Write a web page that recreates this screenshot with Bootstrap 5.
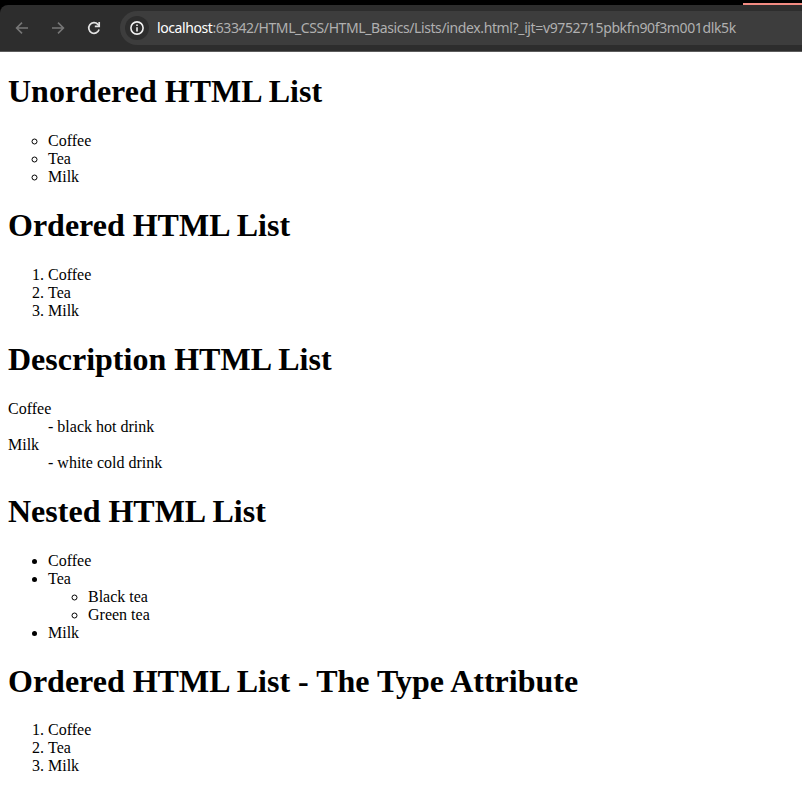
<!DOCTYPE html>
<html lang="en">
<head>
<meta charset="utf-8">
<meta name="viewport" content="width=device-width, initial-scale=1">
<title>HTML Lists</title>
<link href="https://cdn.jsdelivr.net/npm/bootstrap@5.3.0/dist/css/bootstrap.min.css" rel="stylesheet">
<style>
  body { background: #fff; overflow: hidden; }
  .tab-strip { height: 5px; background: #000; padding-top: 3px; }
  .tab-line { width: 59px; height: 2px; background: #f28b82; }
  .toolbar-wrap { background: #000; }
  .toolbar { height: 47px; background: #2d2d2d; border-bottom: 1px solid #5c5c5c; border-top-left-radius: 8px; padding: 6px 0 6px 14px; }
  .tool-btn { width: 16px; height: 16px; margin-right: 20px; }
  .tool-btn svg, .info svg { display: block; }
  .address { height: 34px; background: #3d3d3d; border-radius: 17px 0 0 17px; padding-left: 5px; margin-left: -2px; }
  .info { width: 24px; height: 24px; background: #2d2d2d; }
  .url { font: 14px/20px "Noto Sans", "Open Sans", sans-serif; color: #b0b0b0; margin-left: 8px; white-space: nowrap; }
  .url .host { display: inline-block; color: #fff; letter-spacing: -.42px; }
  .url .path { display: inline-block; letter-spacing: -.41px; }
  .url .file { display: inline-block; letter-spacing: -.37px; }
  .page { font: 16px/18px "Liberation Serif", "Times New Roman", serif; color: #000; padding: 0 8px; display: flow-root; }
  .page h1 { font-size: 32px; line-height: 37px; font-weight: 700; margin: 21.44px 0; color: #000; }
  .page ul, .page ol { padding-left: 40px; margin: 0; }
  .page dl { margin: 0; }
  .page dt { font-weight: 400; }
  .page dd { margin: 0 0 0 40px; }
  .hollow { list-style-type: circle; }
</style>
<script src="https://cdn.jsdelivr.net/npm/bootstrap@5.3.0/dist/js/bootstrap.bundle.min.js"></script>
</head>
<body>
<header>
  <div class="tab-strip d-flex justify-content-end"><div class="tab-line"></div></div>
  <div class="toolbar-wrap">
    <nav class="toolbar d-flex align-items-center" aria-label="Browser toolbar">
      <span class="tool-btn flex-shrink-0"><svg width="16" height="16" viewBox="0 0 16 16" fill="none" stroke="#777" stroke-width="1.6"><path d="M14 8H3M8 2.6 2.6 8 8 13.4"/></svg></span>
      <span class="tool-btn flex-shrink-0"><svg width="16" height="16" viewBox="0 0 16 16" fill="none" stroke="#777" stroke-width="1.6"><path d="M2 8h11M8 2.6 13.4 8 8 13.4"/></svg></span>
      <span class="tool-btn flex-shrink-0"><svg width="16" height="16" viewBox="0 0 16 16" fill="none" stroke="#e3e3e3" stroke-width="1.7"><path d="M13.1 9.6A5.3 5.3 0 1 1 11.9 4.3L13 5.6"/><path d="M13.2 2v4.3H8.8"/></svg></span>
      <div class="address d-flex align-items-center flex-grow-1">
        <span class="info rounded-circle d-flex align-items-center justify-content-center flex-shrink-0"><svg width="14" height="14" viewBox="0 0 14 14" fill="none" stroke="#f1f1f1" stroke-width="1.6"><circle cx="7" cy="7" r="6.1"/><path d="M7 6.2v4.2M7 3.5v1.6"/></svg></span>
        <div class="url"><span class="host">localhost</span><span class="path">:63342/HTML_CSS/HTML_Basics/Lists/</span><span class="file">index.html?_ijt=v9752715pbkfn90f3m001dlk5k</span></div>
      </div>
    </nav>
  </div>
</header>
<main class="page">
  <h1>Unordered HTML List</h1>
  <ul class="hollow"><li>Coffee</li><li>Tea</li><li>Milk</li></ul>
  <h1>Ordered HTML List</h1>
  <ol><li>Coffee</li><li>Tea</li><li>Milk</li></ol>
  <h1>Description HTML List</h1>
  <dl>
    <dt>Coffee</dt><dd>- black hot drink</dd>
    <dt>Milk</dt><dd>- white cold drink</dd>
  </dl>
  <h1>Nested HTML List</h1>
  <ul>
    <li>Coffee</li>
    <li>Tea
      <ul class="hollow"><li>Black tea</li><li>Green tea</li></ul>
    </li>
    <li>Milk</li>
  </ul>
  <h1>Ordered HTML List - The Type Attribute</h1>
  <ol type="1"><li>Coffee</li><li>Tea</li><li>Milk</li></ol>
</main>
</body>
</html>
